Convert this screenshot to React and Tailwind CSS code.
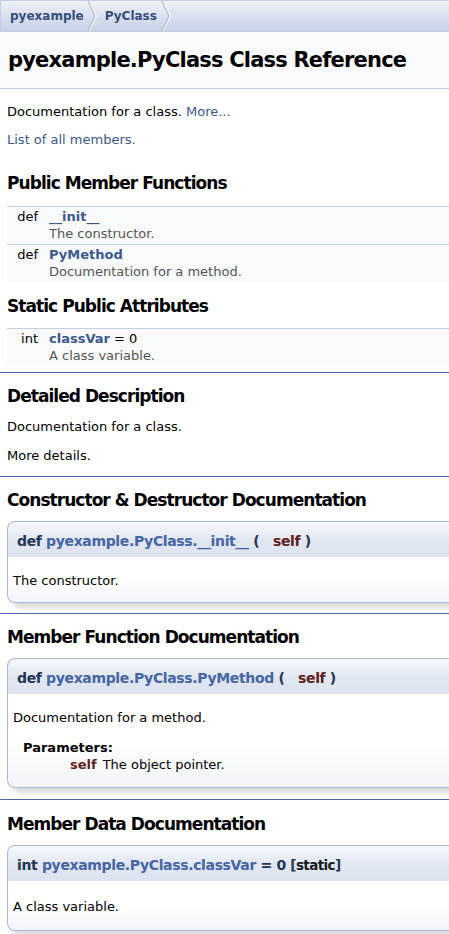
// Doxygen class reference page for pyexample.PyClass.

const body = "font-['DejaVu_Sans',Verdana,sans-serif]";
const head = "font-['DejaVu_Sans',Tahoma,sans-serif] font-bold";

function Chevron() {
  return (
    <svg width="12" height="30" viewBox="0 0 12 30" className="shrink-0">
      <path d="M2 0 L9 15 L2 30" fill="none" stroke="#ffffff" strokeWidth="1.5" />
      <path d="M1 0 L8 15 L1 30" fill="none" stroke="#9aaed4" strokeWidth="1" />
    </svg>
  );
}

function NavBar() {
  return (
    <div className="flex h-[32px] items-center border border-[#C2CDE4] bg-gradient-to-b from-[#eef1f7] to-[#c6d0e6]">
      <span className={`${head} pl-[9px] pr-[3px] text-[12px] text-[#364D7C]`}>pyexample</span>
      <Chevron />
      <span className={`${head} pl-[6px] pr-[4px] text-[12px] text-[#364D7C]`}>PyClass</span>
      <Chevron />
    </div>
  );
}

function Heading({ children, className = '' }) {
  return <h2 className={`${head} tracking-[-0.95px] text-[17px] text-black ${className}`}>{children}</h2>;
}

function Rule() {
  return <div className="h-px bg-[#4A6AAA]" />;
}

function MemberRow({ type, name, extra, desc }) {
  return (
    <div className="flex border-t border-[#C4CFE5] bg-[#F9FAFC] pt-px pb-[2px]">
      <div className="w-[34px] shrink-0 pr-[3px] text-right">{type}</div>
      <div className="pl-[8px]">
        <div>
          <a className="font-bold text-[#3D578C]">{name}</a>
          {extra}
        </div>
        <div className="text-[#555]">{desc}</div>
      </div>
    </div>
  );
}

function MemItem({ proto, children, padding = 'pt-[15px] pb-[13px]' }) {
  return (
    <div className="rounded-[8px] shadow-[5px_5px_5px_rgba(0,0,0,0.15)]">
      <div className="flex h-[36px] items-center rounded-t-[8px] border border-b-0 border-[#A8B8D9] bg-gradient-to-b from-[#f7f9fc] via-[#e2e8f2] to-[#dce3ef] pt-[3px] pl-[9px]">
        <div className={`${head} text-[14px] tracking-[-0.35px] text-[#253555]`}>{proto}</div>
      </div>
      <div className={`rounded-b-[8px] border border-t-0 border-[#A8B8D9] bg-gradient-to-b from-white via-white to-[#f2f4f9] px-[5px] ${padding}`}>
        {children}
      </div>
    </div>
  );
}

const Param = ({ children }) => <span className="text-[#602020]">{children}</span>;
const Link = ({ children }) => <span className="text-[#4665A2]">{children}</span>;

export default function App() {
  return (
    <div className={`${body} w-full overflow-x-hidden bg-white text-[13px] leading-[17px] text-black`}>
      <div className="w-[480px]">
        <NavBar />
        <div className="flex h-[57px] items-center border-b border-[#C4CFE5] bg-[#F9FAFC] pl-[8px]">
          <div className={`${head} tracking-[-0.8px] text-[21px]`}>pyexample.PyClass Class Reference</div>
        </div>

        <div className="pl-[7px]">
          <p className="mt-[14px]">
            Documentation for a class. <a className="text-[#3D578C]">More...</a>
          </p>
          <p className="mt-[11px]">
            <a className="text-[#3D578C]">List of all members.</a>
          </p>

          <Heading className="mt-[27px]">Public Member Functions</Heading>
          <div className="mt-[14px]">
            <MemberRow type="def" name="__init__" desc="The constructor." />
            <MemberRow type="def" name="PyMethod" desc="Documentation for a method." />
          </div>

          <Heading className="mt-[16px]">Static Public Attributes</Heading>
          <div className="mt-[13px]">
            <MemberRow type="int" name="classVar" extra=" = 0" desc="A class variable." />
          </div>
        </div>

        <div className="mt-[6px]"><Rule /></div>

        <div className="pl-[7px]">
          <Heading className="mt-[15px]">Detailed Description</Heading>
          <p className="mt-[13px]">Documentation for a class.</p>
          <p className="mt-[12px]">More details.</p>
        </div>

        <div className="mt-[12px]"><Rule /></div>

        <div className="pl-[7px]">
          <Heading className="mt-[15px]">Constructor &amp; Destructor Documentation</Heading>
          <div className="mt-[12px]">
            <MemItem
              proto={
                <>
                  def <Link>pyexample.PyClass.__init__</Link> ( &nbsp; <Param>self</Param> )
                </>
              }
            >
              <p>The constructor.</p>
            </MemItem>
          </div>
        </div>

        <div className="mt-[10px]"><Rule /></div>

        <div className="pl-[7px]">
          <Heading className="mt-[15px]">Member Function Documentation</Heading>
          <div className="mt-[12px]">
            <MemItem
              padding="pt-[15px] pb-[14px]"
              proto={
                <>
                  def <Link>pyexample.PyClass.PyMethod</Link> ( &nbsp; <Param>self</Param> )
                </>
              }
            >
              <p>Documentation for a method.</p>
              <div className="mt-[13px] pl-[10px]">
                <div className="font-bold">Parameters:</div>
                <div className="flex pl-[47px]">
                  <span className="font-bold text-[#602020]">self</span>
                  <span className="pl-[6px]">The object pointer.</span>
                </div>
              </div>
            </MemItem>
          </div>
        </div>

        <div className="mt-[11px]"><Rule /></div>

        <div className="pl-[7px] pb-[8px]">
          <Heading className="mt-[16px]">Member Data Documentation</Heading>
          <div className="mt-[12px]">
            <MemItem
              padding="pt-[17px] pb-[15px]"
              proto={
                <>
                  int <Link>pyexample.PyClass.classVar</Link> = 0{' '}
                  <span className="text-[13.5px] tracking-[-0.6px]">
                    [<span className="text-[#1a1a1a]">static</span>]
                  </span>
                </>
              }
            >
              <p>A class variable.</p>
            </MemItem>
          </div>
        </div>
      </div>
    </div>
  );
}
